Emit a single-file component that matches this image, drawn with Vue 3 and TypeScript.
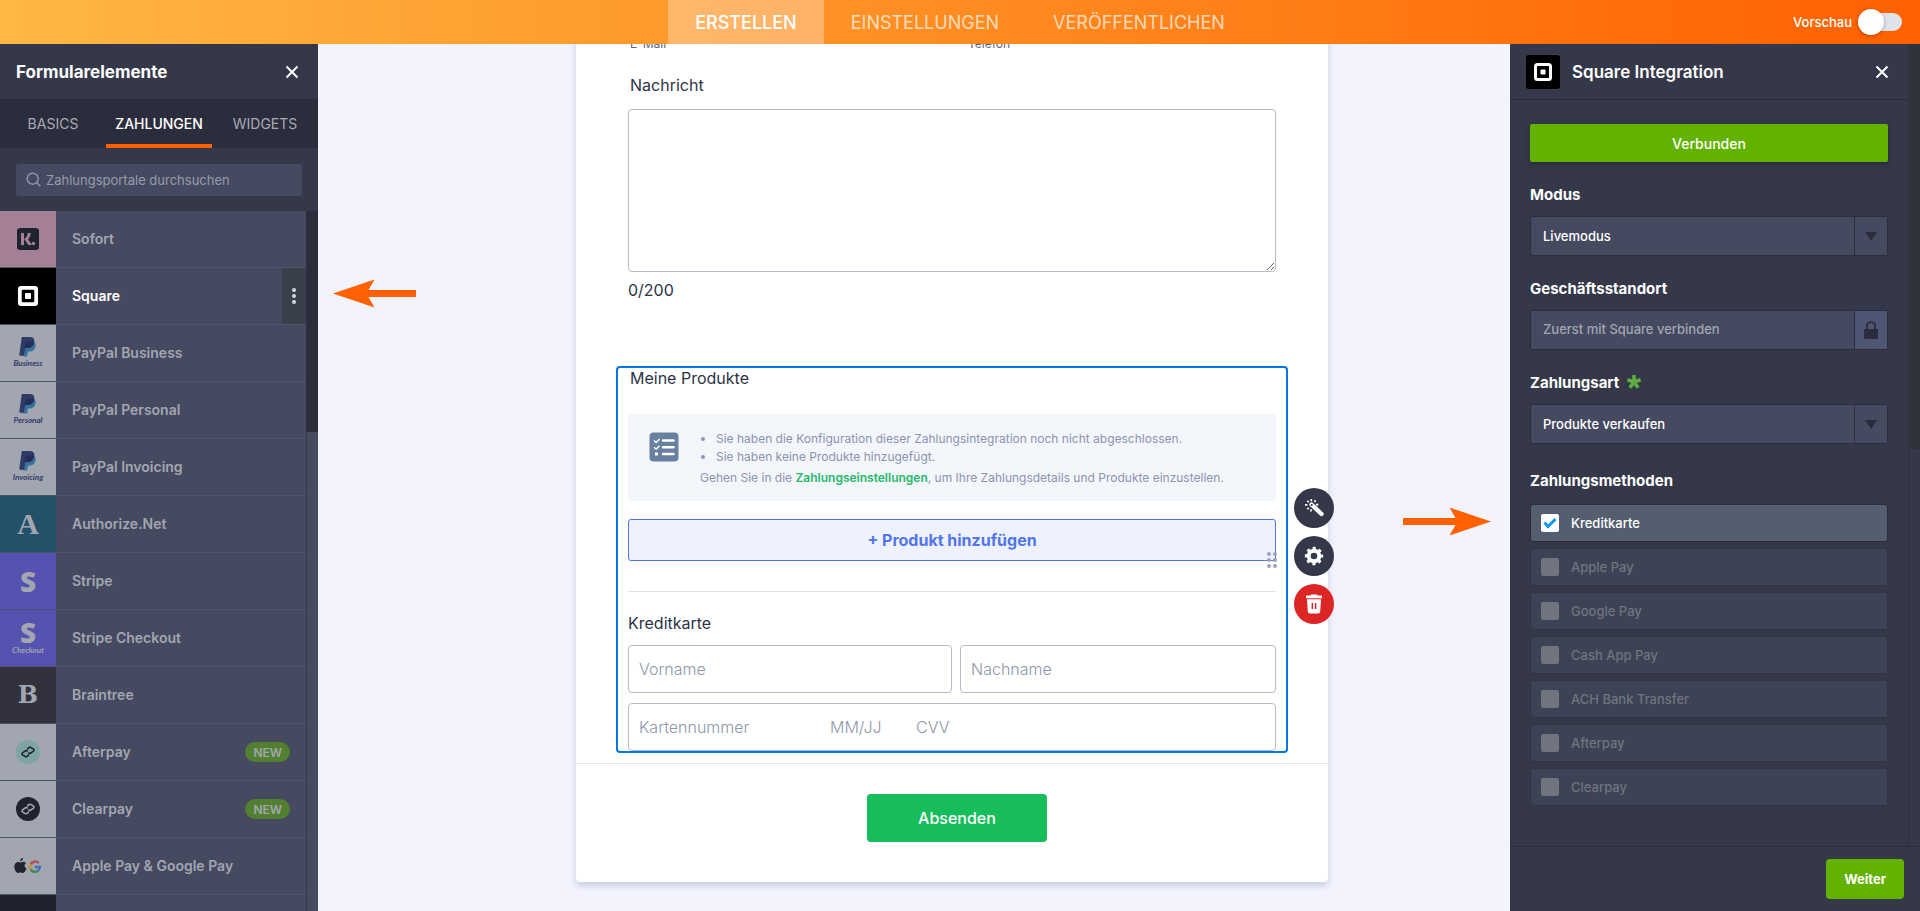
<script setup lang="ts">
import { ref } from 'vue'

interface Gateway {
  name: string
  tile: string
  icon: string
  caption?: string
  active?: boolean
  isNew?: boolean
}

const gateways: Gateway[] = [
  { name: 'Sofort', tile: 'pink', icon: 'klarna' },
  { name: 'Square', tile: 'black', icon: 'square', active: true },
  { name: 'PayPal Business', tile: 'grey', icon: 'paypal', caption: 'Business' },
  { name: 'PayPal Personal', tile: 'grey', icon: 'paypal', caption: 'Personal' },
  { name: 'PayPal Invoicing', tile: 'grey', icon: 'paypal', caption: 'Invoicing' },
  { name: 'Authorize.Net', tile: 'teal', icon: 'authorize' },
  { name: 'Stripe', tile: 'violet', icon: 'stripe' },
  { name: 'Stripe Checkout', tile: 'violet', icon: 'stripe', caption: 'Checkout' },
  { name: 'Braintree', tile: 'coal', icon: 'braintree' },
  { name: 'Afterpay', tile: 'grey', icon: 'afterpay', isNew: true },
  { name: 'Clearpay', tile: 'grey', icon: 'clearpay', isNew: true },
  { name: 'Apple Pay & Google Pay', tile: 'grey', icon: 'wallets' },
  { name: '', tile: 'ink', icon: '' },
]

const sections = ['ERSTELLEN', 'EINSTELLUNGEN', 'VERÖFFENTLICHEN']
const panelTabs = ['BASICS', 'ZAHLUNGEN', 'WIDGETS']

const methods = ref([
  { name: 'Kreditkarte', checked: true },
  { name: 'Apple Pay', checked: false },
  { name: 'Google Pay', checked: false },
  { name: 'Cash App Pay', checked: false },
  { name: 'ACH Bank Transfer', checked: false },
  { name: 'Afterpay', checked: false },
  { name: 'Clearpay', checked: false },
])
</script>

<template>
  <div class="app">
    <header class="topbar">
      <nav class="sections" aria-label="Bereiche">
        <a
          v-for="(section, i) in sections"
          :key="section"
          href="#"
          class="section"
          :class="{ current: i === 0 }"
        >{{ section }}</a>
      </nav>
      <label class="preview">
        <span>Vorschau</span>
        <input type="checkbox" class="switch" />
      </label>
    </header>

    <div class="workspace">
      <aside class="panel elements">
        <div class="panel-head">
          <h2>Formularelemente</h2>
          <button type="button" class="close" aria-label="Schließen">
            <svg width="14" height="14" viewBox="0 0 14 14"><path d="M1.500 1.500l11 11M12.500 1.500l-11 11" /></svg>
          </button>
        </div>
        <div class="tabs">
          <button
            v-for="(tab, i) in panelTabs"
            :key="tab"
            type="button"
            class="tab"
            :class="{ current: i === 1 }"
          >{{ tab }}</button>
        </div>
        <div class="search-row">
          <label class="search">
            <svg width="16" height="16" viewBox="0 0 16 16"><circle cx="6.700" cy="6.700" r="5.500" /><path d="M10.800 10.800l3.500 3.500" /></svg>
            <input type="text" placeholder="Zahlungsportale durchsuchen" aria-label="Zahlungsportale durchsuchen" />
          </label>
        </div>
        <div class="list-area">
          <ul class="gateways">
            <li v-for="g in gateways" :key="g.name" class="gateway" :class="{ active: g.active }">
              <span class="tile" :class="g.tile">
                <svg v-if="g.icon === 'klarna'" width="22" height="22" viewBox="0 0 22 22">
                  <rect width="22" height="22" rx="3" fill="#20222f" />
                  <path d="M4 5h3v12H4zM10.700 5h3c0 2.800-1.100 4.800-2.700 6.200l4 5.800h-3.600L7.200 11c2-1.200 3.400-3.200 3.500-6z" fill="#a48096" />
                  <circle cx="16.500" cy="15.500" r="1.700" fill="#a48096" />
                </svg>
                <svg v-else-if="g.icon === 'square'" width="20" height="20" viewBox="0 0 20 20">
                  <path fill="#fff" fill-rule="evenodd" d="M3 0h14a3 3 0 013 3v14a3 3 0 01-3 3H3a3 3 0 01-3-3V3a3 3 0 013-3zm2 3.700A1.300 1.300 0 003.700 5v10A1.300 1.300 0 005 16.300h10a1.300 1.300 0 001.300-1.300V5A1.300 1.300 0 0015 3.700zM7.800 7h4.400a.8.8 0 01.8.8v4.400a.8.8 0 01-.8.8H7.800a.8.8 0 01-.8-.8V7.800a.8.8 0 01.8-.8z" />
                </svg>
                <svg v-else-if="g.icon === 'paypal'" width="18" height="20" viewBox="0 0 18 20">
                  <path d="M6.500 5h8.700c1.300 1 1.700 2.500 1.300 4.500-.7 3.300-2.700 5-6 5H9l-.9 5H4.300z" fill="#36729b" />
                  <path d="M2.800 0h7.900c3.600 0 5.200 2.100 4.500 5.500-.8 3.700-3.200 5.500-6.900 5.500H6.200L4.900 18.800H1.200a.9.9 0 01-.9-1.100z" fill="#2f3a68" />
                  <path d="M6.500 5.500c.1-.5.500-.7 1-.7h5.200c.9 0 1.700.1 2.400.4-.7 3.900-3 5.800-6.800 5.800H6.200l-.8 4z" fill="#272f55" />
                </svg>
                <span v-else-if="g.icon === 'authorize'" class="glyph serif">A</span>
                <span v-else-if="g.icon === 'stripe'" class="glyph heavy">S</span>
                <span v-else-if="g.icon === 'braintree'" class="glyph slab">B</span>
                <svg v-else-if="g.icon === 'afterpay' || g.icon === 'clearpay'" width="24" height="24" viewBox="0 0 24 24">
                  <circle cx="12" cy="12" r="12" :fill="g.icon === 'afterpay' ? '#7da5a3' : '#20222f'" />
                  <g fill="none" :stroke="g.icon === 'afterpay' ? '#20222f' : '#a2a6b1'" stroke-width="1.500" stroke-linejoin="round">
                    <path d="M11.300 9.700L12.200 7.700 14.200 7.200 18 9.300 17.600 11.200 14 13.500 12.300 12.800" />
                    <path d="M12.700 14.300L11.800 16.300 9.800 16.800 6 14.700 6.400 12.800 10 10.500 11.700 11.200" />
                  </g>
                </svg>
                <svg v-else-if="g.icon === 'wallets'" width="28" height="16" viewBox="0 0 28 16">
                  <path fill="#20222f" d="M9 0c.1 1.700-1.200 3.300-2.900 3.200C6 1.600 7.400.2 9 0zM11.800 5.500C10 6.600 10.200 9.400 12.500 10.300c-.6 1.900-2 4.700-3.600 4.700-1 0-1.300-.6-2.400-.6s-1.500.6-2.400.6C2.200 15 .3 11.500.3 8.600c0-3 1.900-4.700 3.700-4.700 1.100 0 1.900.7 2.600.7.600 0 1.600-.8 3-.8.900 0 1.800.6 2.200 1.700z" />
                  <g fill="none" stroke-width="2.500">
                    <path d="M24.700 5.100A5 5 0 0016.700 6.300" stroke="#b4525b" />
                    <path d="M16.700 6.300a5 5 0 000 5.400" stroke="#b9963d" />
                    <path d="M16.700 11.500a5 5 0 007.500 1.100" stroke="#3d8a5b" />
                    <path d="M24.200 12.600A5 5 0 0025.800 9H21" stroke="#4470b8" />
                  </g>
                </svg>
                <em v-if="g.caption" class="caption">{{ g.caption }}</em>
              </span>
              <span class="name">{{ g.name }}</span>
              <span v-if="g.isNew" class="badge">NEW</span>
              <button v-if="g.active" type="button" class="more" aria-label="Mehr">
                <svg width="4" height="18" viewBox="0 0 4 18"><circle cx="2" cy="3" r="2" /><circle cx="2" cy="9" r="2" /><circle cx="2" cy="15" r="2" /></svg>
              </button>
            </li>
          </ul>
          <div class="scroll-track"><div class="thumb"></div></div>
        </div>
      </aside>

      <main class="canvas">
        <div class="sheet">
          <div class="sublabels">
            <span>E-Mail</span>
            <span>Telefon</span>
          </div>
          <div class="field message">
            <label for="message">Nachricht</label>
            <textarea id="message"></textarea>
            <span class="counter">0/200</span>
          </div>

          <section class="selected">
            <h3>Meine Produkte</h3>
            <div class="notice">
              <svg width="30" height="30" viewBox="0 0 30 30">
                <rect x=".5" y=".5" width="29" height="29" rx="4" fill="#6881a0" />
                <g stroke="#fff" fill="none">
                  <path d="M14 8.500h10.500M14 15.200h10.500M14 22h10.500" stroke-width="2.600" stroke-linecap="round" />
                  <path d="M5 8.500l2.200 2L10.500 7M5 15.200l2.200 2 3.300-3.500" stroke-width="1.400" />
                </g>
                <rect x="6" y="20.500" width="3" height="3" fill="#fff" />
              </svg>
              <div class="notice-text">
                <ul>
                  <li>Sie haben die Konfiguration dieser Zahlungsintegration noch nicht abgeschlossen.</li>
                  <li>Sie haben keine Produkte hinzugefügt.</li>
                </ul>
                <p>Gehen Sie in die <a href="#">Zahlungseinstellungen</a>, um Ihre Zahlungsdetails und Produkte einzustellen.</p>
              </div>
            </div>
            <div class="add-row">
              <button type="button" class="add">+ Produkt hinzufügen</button>
              <svg class="grip" width="10" height="16" viewBox="0 0 10 16">
                <circle cx="2" cy="2" r="2" /><circle cx="8" cy="2" r="2" />
                <circle cx="2" cy="8" r="2" /><circle cx="8" cy="8" r="2" />
                <circle cx="2" cy="14" r="2" /><circle cx="8" cy="14" r="2" />
              </svg>
            </div>
            <hr />
            <h4>Kreditkarte</h4>
            <div class="names">
              <input type="text" placeholder="Vorname" aria-label="Vorname" />
              <input type="text" placeholder="Nachname" aria-label="Nachname" />
            </div>
            <div class="card-line">
              <input class="number" type="text" placeholder="Kartennummer" aria-label="Kartennummer" />
              <input class="expiry" type="text" placeholder="MM/JJ" aria-label="MM/JJ" />
              <input class="cvv" type="text" placeholder="CVV" aria-label="CVV" />
            </div>

            <div class="tools">
              <button type="button" aria-label="Assistent">
                <svg width="20" height="20" viewBox="0 0 20 20">
                  <path d="M7.500 6.500l10 9.500" stroke="#fff" stroke-width="4.400" stroke-linecap="round" />
                  <circle cx="7.700" cy="7" r="1.100" fill="#343849" />
                  <path d="M7.300 3.200V1M3.300 6.900H1M4.700 4.200L3.300 2.800M10.400 3.900l1.300-1.500M12 6.700h2.300M4.700 9.800l-1.300 1.500M7 11.300v2.200" stroke="#fff" stroke-width="1.700" />
                </svg>
              </button>
              <button type="button" aria-label="Einstellungen">
                <svg width="20" height="20" viewBox="0 0 20 20">
                  <circle cx="10" cy="10" r="5.300" fill="none" stroke="#fff" stroke-width="4" />
                  <circle cx="10" cy="10" r="7.900" fill="none" stroke="#fff" stroke-width="2.600" stroke-dasharray="3.100 3.100" stroke-dashoffset="1.550" />
                </svg>
              </button>
              <button type="button" class="danger" aria-label="Löschen">
                <svg width="18" height="20" viewBox="0 0 18 20">
                  <path d="M5.500 1.500L6 .5h6l.5 1H17v2.800H1V1.500z" fill="#fff" />
                  <path fill="#fff" fill-rule="evenodd" d="M2 5.300h14l-.8 12.200c-.1 1.300-.9 2-2 2H4.800c-1.100 0-1.900-.7-2-2zM6.600 9v6h1.500V9zm3.300 0v6h1.500V9z" />
                </svg>
              </button>
            </div>
          </section>

          <div class="submit-row">
            <button type="submit" class="submit">Absenden</button>
          </div>
        </div>

        <svg class="pointer to-left" width="83" height="29" viewBox="0 0 83 29">
          <path d="M0 14.500L41.500.5 35.500 11H83v7H35.500l6 10.500z" />
        </svg>
        <svg class="pointer to-right" width="88" height="29" viewBox="0 0 88 29">
          <path d="M88 14.500L46.500.5l6 10.500H0v7h52.500l-6 10.500z" />
        </svg>
      </main>

      <aside class="panel settings">
        <div class="settings-body">
          <div class="settings-main">
            <div class="panel-head ruled">
              <span class="logo">
                <svg width="18" height="18" viewBox="0 0 18 18">
                  <rect x="1.500" y="1.500" width="15" height="15" rx="2" fill="none" stroke="#fff" stroke-width="3" />
                  <rect x="6.500" y="6.500" width="5" height="5" rx="1" fill="#fff" />
                </svg>
              </span>
              <h2>Square Integration</h2>
              <button type="button" class="close" aria-label="Schließen">
                <svg width="14" height="14" viewBox="0 0 14 14"><path d="M1.500 1.500l11 11M12.500 1.500l-11 11" /></svg>
              </button>
            </div>
            <div class="options">
              <button type="button" class="connected">Verbunden</button>

              <div class="option">
                <label for="mode">Modus</label>
                <div class="select">
                  <select id="mode"><option>Livemodus</option></select>
                  <span class="addon"><svg width="12" height="9" viewBox="0 0 12 9"><path d="M0 0h12L6 9z" /></svg></span>
                </div>
              </div>

              <div class="option">
                <label for="location">Geschäftsstandort</label>
                <div class="select">
                  <input id="location" type="text" placeholder="Zuerst mit Square verbinden" readonly />
                  <span class="addon lock">
                    <svg width="14" height="18" viewBox="0 0 14 18"><path d="M0 8h14v10H0z" /><path d="M3 8V5a4 4 0 018 0v3" class="shackle" /></svg>
                  </span>
                </div>
              </div>

              <div class="option">
                <label for="kind">Zahlungsart
                  <svg width="14" height="14" viewBox="0 0 14 14" class="required"><path d="M7 7V0M7 7l6.600-2.200M7 7l4.100 5.700M7 7l-4.100 5.700M7 7L.4 4.800" /></svg>
                </label>
                <div class="select">
                  <select id="kind"><option>Produkte verkaufen</option></select>
                  <span class="addon"><svg width="12" height="9" viewBox="0 0 12 9"><path d="M0 0h12L6 9z" /></svg></span>
                </div>
              </div>

              <fieldset class="methods">
                <legend>Zahlungsmethoden</legend>
                <label v-for="m in methods" :key="m.name" class="method" :class="{ on: m.checked }">
                  <span class="box">
                    <input v-model="m.checked" type="checkbox" />
                    <svg v-if="m.checked" width="14" height="12" viewBox="0 0 14 12"><path d="M1.500 5.500l3.500 4L12.500 2" /></svg>
                  </span>
                  <span>{{ m.name }}</span>
                </label>
              </fieldset>
            </div>
          </div>
          <div class="scroll-track"><div class="thumb"></div></div>
        </div>
        <div class="settings-foot">
          <button type="button" class="next">Weiter</button>
        </div>
      </aside>
    </div>
  </div>
</template>

<style>
body {
  margin: 0;
}
</style>

<style scoped>
.app,
.app * {
  box-sizing: border-box;
}

.app {
  display: flex;
  flex-direction: column;
  height: 100vh;
  overflow: hidden;
  font-family: Inter, "Liberation Sans", sans-serif;
  font-size: 14px;
  color: #fff;
}

button,
input,
select,
textarea {
  font: inherit;
  color: inherit;
  margin: 0;
}

button {
  border: 0;
  padding: 0;
  background: none;
}

h2,
h3,
h4,
p,
ul {
  margin: 0;
  padding: 0;
}

ul {
  list-style: none;
}

svg {
  flex: none;
}

/* Top bar */
.topbar {
  display: grid;
  grid-template-columns: 1fr auto 1fr;
  flex: none;
  height: 44px;
  background: linear-gradient(90deg, #ffb743, #ff6100);
}

.sections {
  grid-column: 2;
  display: flex;
}

.section {
  display: flex;
  align-items: center;
  padding: 0 27px;
  font-size: 18px;
  color: rgba(255, 255, 255, 0.7);
  text-decoration: none;
}

.section.current {
  background: rgba(255, 255, 255, 0.3);
  color: #fff;
  font-weight: 500;
}

.preview {
  display: flex;
  align-items: center;
  justify-content: flex-end;
  gap: 6px;
  padding-right: 18px;
  font-weight: 500;
  font-size: 13px;
}

.switch {
  appearance: none;
  display: flex;
  align-items: center;
  width: 44px;
  height: 18px;
  border-radius: 9px;
  background: #e1e3ea;
}

.switch::before {
  content: "";
  width: 26px;
  height: 26px;
  border-radius: 50%;
  background: #fff;
  box-shadow: 0 1px 4px rgba(0, 0, 0, 0.3);
}

/* Workspace */
.workspace {
  display: grid;
  grid-template-columns: 318px 1fr 410px;
  flex: 1;
  min-height: 0;
}

.panel {
  display: flex;
  flex-direction: column;
  min-height: 0;
  background: #343849;
}

.panel-head {
  display: flex;
  align-items: center;
  flex: none;
  height: 55px;
  padding: 0 19px 0 16px;
}

.panel-head h2 {
  flex: 1;
  font-size: 17px;
  font-weight: 700;
}

.close {
  display: flex;
}

.close svg {
  fill: none;
  stroke: #fff;
  stroke-width: 2;
}

.tabs {
  display: grid;
  grid-template-columns: repeat(3, 1fr);
  flex: none;
  height: 49px;
  background: #2b2d3c;
}

.tab {
  padding-top: 4px;
  border-bottom: 4px solid transparent;
  color: #a8abb6;
}

.tab.current {
  border-color: #ff6100;
  color: #fff;
  font-weight: 500;
}

.search-row {
  flex: none;
  height: 63px;
  padding: 16px 16px 0;
}

.search {
  display: flex;
  align-items: center;
  gap: 4px;
  height: 32px;
  padding: 0 10px;
  border-radius: 3px;
  background: #454a60;
}

.search svg {
  fill: none;
  stroke: #8e95ab;
  stroke-width: 1.5;
}

.search input {
  flex: 1;
  min-width: 0;
  padding: 0;
  border: 0;
  background: none;
  font-size: 13px;
}

.search input::placeholder {
  color: #979cac;
  opacity: 1;
}

.list-area {
  display: grid;
  grid-template-columns: 1fr 12px;
  flex: 1;
  min-height: 0;
  overflow: hidden;
}

.scroll-track {
  border-left: 1px solid #343849;
  background: #454a60;
}

.elements .thumb {
  height: 221px;
  margin-left: -1px;
  background: #2b2d3c;
}

.gateway {
  display: flex;
  align-items: center;
  height: 57px;
  border-bottom: 1px solid #4a5666;
  background: #454a60;
  color: #a2a6b1;
  font-weight: 600;
}

.gateway.active {
  color: #fff;
}

.tile {
  display: flex;
  flex-direction: column;
  align-items: center;
  justify-content: center;
  flex: none;
  width: 56px;
  height: 56px;
  color: #a2a6b1;
}

.tile.pink { background: #a48096; }
.tile.black { background: #000; }
.tile.grey { background: #a2a6b1; }
.tile.teal { background: #215269; }
.tile.violet { background: #5552b0; }
.tile.coal { background: #31323d; }
.tile.ink { background: #20222f; }

.glyph {
  font-size: 30px;
  font-weight: 700;
  line-height: 24px;
}

.serif {
  font-family: "Liberation Serif", serif;
}

.heavy {
  font-family: "Open Sans", sans-serif;
  font-size: 28px;
  font-weight: 800;
}

.slab {
  font-family: "DejaVu Serif", serif;
  font-size: 24px;
}

.caption {
  font-family: Lato, sans-serif;
  font-size: 8px;
  font-weight: 700;
  line-height: 12px;
  color: #2f3a68;
}

.violet .caption {
  color: #a2a6b1;
}

.name {
  flex: 1;
  padding: 0 0 2px 16px;
}

.badge {
  display: flex;
  align-items: center;
  height: 20px;
  margin-right: 16px;
  padding: 0 8px;
  border-radius: 10px;
  background: #538030;
  font-size: 12px;
}

.more {
  display: flex;
  align-items: center;
  justify-content: center;
  align-self: stretch;
  width: 24px;
  background: #393f4b;
}

.more svg {
  fill: #d3d6dc;
}

/* Canvas */
.canvas {
  position: relative;
  min-width: 0;
  padding-left: 76px;
  overflow: hidden;
  background: #f3f3fe;
  color: #2c3345;
}

.sheet {
  max-width: 752px;
  margin: -12px auto 0;
  border-radius: 0 0 4px 4px;
  background: #fff;
  box-shadow: 0 4px 6px rgba(80, 90, 140, 0.25);
}

.sublabels {
  display: grid;
  grid-template-columns: 338px 1fr;
  padding: 4px 54px 0;
  font-size: 12px;
  line-height: 16px;
  color: #57647e;
}

.message {
  display: flex;
  flex-direction: column;
  padding: 23px 52px 0;
  font-size: 16px;
  line-height: 20px;
}

.message label {
  padding-left: 2px;
}

.message textarea {
  height: 163px;
  margin: 14px 0 8px;
  border: 1px solid #b8bdc9;
  border-radius: 4px;
  background: #fff;
}

.selected {
  position: relative;
  margin: 66px 40px 0;
  padding: 0 10px;
  border: 2px solid #0075e3;
  border-radius: 4px;
}

.selected h3,
.selected h4 {
  font-size: 16px;
  font-weight: 400;
  line-height: 20px;
}

.selected h3 {
  padding: 0 2px;
}

.notice {
  display: flex;
  gap: 21px;
  height: 87px;
  margin-top: 26px;
  padding: 16px 21px;
  border-radius: 4px;
  background: #f3f6fb;
  font-size: 12px;
  line-height: 18px;
  color: #8d93b0;
}

.notice svg {
  margin-top: 2px;
}

.notice ul {
  margin-left: 16px;
  list-style: disc;
}

.notice p {
  margin-top: 3px;
}

.notice a {
  color: #27b86b;
  font-weight: 600;
  text-decoration: none;
}

.add-row {
  position: relative;
  margin-top: 18px;
}

.add {
  display: block;
  width: 100%;
  height: 42px;
  border: 1px solid #4f74e8;
  border-radius: 3px;
  background: #eef2fe;
  color: #5274ec;
  font-size: 16px;
  font-weight: 700;
}

.grip {
  position: absolute;
  right: -1px;
  bottom: -7px;
  fill: #9fa4b5;
}

.selected hr {
  height: 1px;
  margin: 30px 0 21px;
  border: 0;
  background: #dfe1e6;
}

.names {
  display: grid;
  grid-template-columns: 324px 1fr;
  gap: 8px;
  margin-top: 12px;
}

.names input,
.card-line {
  height: 48px;
  padding: 0 10px;
  border: 1px solid #b8bdc9;
  border-radius: 4px;
  background: #fff;
}

.names input {
  width: 100%;
  min-width: 0;
}

.selected input {
  font-size: 16px;
  font-weight: 300;
}

.selected input::placeholder {
  color: #8d97a9;
  opacity: 1;
}

.card-line {
  display: flex;
  margin-top: 10px;
}

.card-line input {
  padding: 0;
  border: 0;
  background: none;
}

.card-line .number {
  width: 191px;
}

.card-line .expiry {
  width: 86px;
}

.card-line .cvv {
  width: 60px;
}

.tools {
  position: absolute;
  top: 120px;
  right: -48px;
  display: grid;
  gap: 8px;
}

.tools button {
  display: flex;
  align-items: center;
  justify-content: center;
  width: 40px;
  height: 40px;
  border-radius: 50%;
  background: #343849;
}

.tools .danger {
  background: #dc2626;
}

.submit-row {
  display: flex;
  justify-content: center;
  margin-top: 10px;
  padding: 30px 0 40px 10px;
  border-top: 1px solid #e3e5ed;
}

.submit {
  width: 180px;
  height: 48px;
  border-radius: 4px;
  background: #18bd5b;
  color: #fff;
  font-size: 16px;
  font-weight: 500;
}

/* Callout arrows lying over the canvas */
.pointer {
  position: absolute;
  fill: #ff6100;
}

.to-left {
  top: 235px;
  left: 15px;
}

.to-right {
  top: 463px;
  right: 19px;
}

/* Settings */
.settings-body {
  display: grid;
  grid-template-columns: 1fr 12px;
  flex: 1;
  min-height: 0;
}

.settings .scroll-track {
  border-color: #2b2d3c;
  background: #343849;
}

.settings .thumb {
  height: 405px;
  margin-left: -1px;
  background: #30333b;
}

.ruled {
  height: 56px;
  border-bottom: 1px solid #2b2d3c;
}

.logo {
  display: flex;
  align-items: center;
  justify-content: center;
  width: 34px;
  height: 34px;
  margin-right: 12px;
  border-radius: 3px;
  background: #000;
}

.ruled h2 {
  font-weight: 600;
}

.options {
  padding: 24px 20px 0;
}

.connected {
  display: block;
  width: 100%;
  height: 38px;
  border-radius: 2px;
  background: #64b200;
  box-shadow: 0 2px 5px rgba(0, 0, 0, 0.3);
  font-weight: 500;
}

.option {
  margin-top: 22px;
}

.option label,
.methods legend {
  display: flex;
  align-items: center;
  gap: 8px;
  height: 20px;
  margin-bottom: 12px;
  padding: 0;
  font-size: 15px;
  font-weight: 700;
}

.required {
  fill: none;
  stroke: #5fad41;
  stroke-width: 3.6;
}

.select {
  display: grid;
  grid-template-columns: 1fr 33px;
  height: 40px;
  border: 1px solid #2b2d3c;
  border-radius: 2px;
  background: #454a60;
}

.select select,
.select input {
  appearance: none;
  min-width: 0;
  padding: 0 12px;
  border: 0;
  background: none;
  font-size: 13px;
  font-weight: 500;
}

.select input {
  padding-bottom: 2px;
}

.select input::placeholder {
  color: #a2a6b1;
  opacity: 1;
}

.addon {
  display: flex;
  align-items: center;
  justify-content: center;
  border-left: 1px solid #2b2d3c;
  fill: #2b2d3c;
  pointer-events: none;
}

.lock {
  background: #4f5673;
}

.shackle {
  fill: none;
  stroke: #2b2d3c;
  stroke-width: 2;
}

.methods {
  display: grid;
  gap: 8px;
  margin: 26px 0 0;
  padding: 0;
  border: 0;
}

.methods legend {
  margin-bottom: 15px;
}

.method {
  display: flex;
  align-items: center;
  gap: 12px;
  height: 36px;
  margin: 0 1px;
  padding: 0 10px;
  border-radius: 2px;
  background: #3d4354;
  box-shadow: 0 0 2px rgba(43, 45, 60, 0.8);
  color: #70747f;
  font-size: 13px;
  font-weight: 500;
}

.method.on {
  background: #545e6f;
  box-shadow: 0 0 0 1px #2b2d3c;
  color: #fff;
}

.box {
  display: grid;
  place-items: center;
}

.box input,
.box svg {
  grid-area: 1 / 1;
}

.box input {
  appearance: none;
  width: 18px;
  height: 18px;
  border-radius: 2px;
  background: #70747f;
}

.box input:checked {
  background: #fff;
}

.box svg {
  z-index: 1;
  fill: none;
  stroke: #0a99ee;
  stroke-width: 3;
  pointer-events: none;
}

.settings-foot {
  display: flex;
  align-items: center;
  justify-content: flex-end;
  flex: none;
  height: 65px;
  padding-right: 16px;
  border-top: 1px solid #2b2d3c;
}

.next {
  height: 40px;
  padding: 0 18px;
  border-radius: 4px;
  background: #64b200;
  font-size: 13px;
  font-weight: 700;
}
</style>
